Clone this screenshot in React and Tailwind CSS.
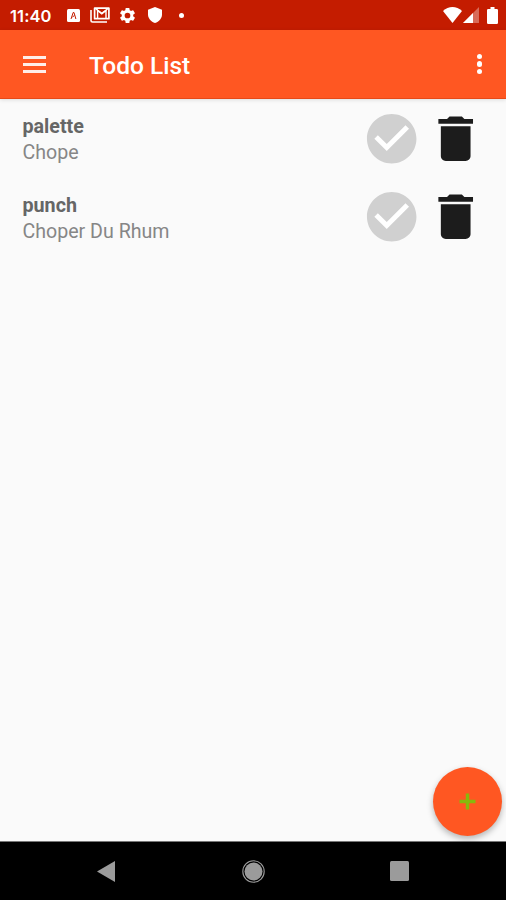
const TODOS = [
  { id: 1, title: 'palette', description: 'Chope' },
  { id: 2, title: 'punch', description: 'Choper Du Rhum' },
]

function StatusBar() {
  return (
    <div className="h-[30px] shrink-0 bg-[#c41c00] flex items-center text-white">
      <span className="ml-[10px] w-[57px] font-['Inter'] text-[16.5px] leading-[30px] font-semibold tracking-[0.1px] whitespace-nowrap mt-px">11:40</span>
      <svg className="w-[13px] h-[13px] mt-px" viewBox="0 0 13 13">
        <rect width="13" height="13" rx="1.5" fill="currentColor" />
        <path d="M4 10 L6.2 3.5 H7 L8.9 10 M5.4 8 L7.5 6.5" fill="none" stroke="#c41c00" strokeWidth="1" />
      </svg>
      <svg className="ml-[10px] w-[20px] h-[16px]" viewBox="0 0 20 16" fill="none" stroke="currentColor">
        <path d="M1 3V13.5Q1 15 2.5 15H17" strokeWidth="1.6" />
        <path d="M4.6 1.2V11.7H18.9V1.2Z" strokeWidth="1.7" strokeLinejoin="round" />
        <path d="M7.6 11V3.4L11.8 6.8L16 3.4V11" strokeWidth="1.4" />
        <path d="M5 1.2L11.8 6.4L18.5 1.2" strokeWidth="1.4" />
      </svg>
      <svg className="ml-[8px] w-[19px] h-[19px]" viewBox="0 0 24 24" fill="currentColor">
        <path d="M19.14 12.94c.04-.3.06-.61.06-.94 0-.32-.02-.64-.07-.94l2.03-1.58a.49.49 0 0 0 .12-.61l-1.92-3.32a.49.49 0 0 0-.59-.22l-2.39.96a7.03 7.03 0 0 0-1.62-.94l-.36-2.54a.48.48 0 0 0-.48-.41h-3.84a.48.48 0 0 0-.47.41l-.36 2.54c-.59.24-1.13.57-1.62.94l-2.39-.96a.48.48 0 0 0-.59.22L2.74 8.87a.48.48 0 0 0 .12.61l2.03 1.58c-.05.3-.09.63-.09.94s.02.64.07.94l-2.03 1.58a.49.49 0 0 0-.12.61l1.92 3.32c.12.22.37.29.59.22l2.39-.96c.5.38 1.03.7 1.62.94l.36 2.54c.05.24.24.41.48.41h3.84c.24 0 .44-.17.47-.41l.36-2.54c.59-.24 1.13-.56 1.62-.94l2.39.96c.22.08.47 0 .59-.22l1.92-3.32a.48.48 0 0 0-.12-.61l-2.01-1.58zM12 15.6A3.6 3.6 0 1 1 12 8.4a3.6 3.6 0 0 1 0 7.2z" />
      </svg>
      <svg className="ml-[11px] w-[14px] h-[16px]" viewBox="0 0 14 16" fill="currentColor">
        <path d="M7 0L14 2.8V7.5C14 11.4 11 14.9 7 16C3 14.9 0 11.4 0 7.5V2.8Z" />
      </svg>
      <span className="ml-[17px] w-[5px] h-[5px] rounded-full bg-white" />
      <div className="ml-auto mr-[8px] flex items-center">
        <svg className="w-[19px] h-[16px]" viewBox="0 0 19 16" fill="currentColor">
          <path d="M0 4C5.5-1.2 13.5-1.2 19 4L9.5 16Z" />
        </svg>
        <svg className="ml-px w-[16px] h-[16px]" viewBox="0 0 16 16" fill="currentColor">
          <path d="M0 16L16 0V16Z" fillOpacity="0.35" />
          <path d="M0 16L10 6V16Z" />
        </svg>
        <svg className="ml-[8px] w-[11px] h-[17px]" viewBox="0 0 11 17" fill="currentColor">
          <path d="M3.5 0H7.5V2H9.8Q11 2 11 3.2V15.8Q11 17 9.8 17H1.2Q0 17 0 15.8V3.2Q0 2 1.2 2H3.5Z" />
        </svg>
      </div>
    </div>
  )
}

function Toolbar() {
  return (
    <header className="h-[69px] shrink-0 bg-[#ff5722] border-b border-[#e64a19] flex items-center text-white shadow-[0_1px_4px_rgba(0,0,0,0.12)]">
      <button className="ml-[23px] w-[23px] h-[17px] flex flex-col justify-between opacity-90">
        <span className="w-full h-[3px] bg-white" />
        <span className="w-full h-[3px] bg-white" />
        <span className="w-full h-[3px] bg-white" />
      </button>
      <h1 className="ml-[43px] text-[24.5px] leading-[28px] font-medium mt-[4px]">Todo List</h1>
      <button className="ml-auto mr-[24px] flex flex-col gap-[2px]">
        <span className="w-[5.5px] h-[5.5px] rounded-full bg-white" />
        <span className="w-[5.5px] h-[5.5px] rounded-full bg-white" />
        <span className="w-[5.5px] h-[5.5px] rounded-full bg-white" />
      </button>
    </header>
  )
}

function TodoItem({ title, description }) {
  return (
    <li className="h-[78.7px] pl-[22.5px] pr-[21px] flex items-center">
      <div className="flex-1 leading-[26.5px] text-[19.7px] pt-[4px]">
        <div className="font-bold text-[#666]">{title}</div>
        <div className="text-[#868686] text-[19.6px]">{description}</div>
      </div>
      <svg className="w-[59.4px] h-[59.4px]" viewBox="0 0 24 24">
        <circle cx="12" cy="12" r="9.5" fill="#fff" />
        <path d="M12 2C6.48 2 2 6.48 2 12s4.48 10 10 10 10-4.48 10-10S17.52 2 12 2zm-2 15l-5-5 1.41-1.41L10 14.17l7.59-7.59L19 8l-9 9z" fill="#d0d0d0" />
      </svg>
      <svg className="ml-[4px] w-[59.4px] h-[59.4px]" viewBox="0 0 24 24" fill="#1c1c1c">
        <path d="M6 19c0 1.1.9 2 2 2h8c1.1 0 2-.9 2-2V7H6v12zM19 4h-3.5l-1-1h-5l-1 1H5v2h14V4z" />
      </svg>
    </li>
  )
}

function NavigationBar() {
  return (
    <nav className="h-[59px] shrink-0 bg-black border-t border-[#777] flex items-center">
      <svg className="ml-[97px] w-[18px] h-[21px]" viewBox="0 0 18 21">
        <path d="M0 10.5L18 0V21Z" fill="#9b9b9b" />
      </svg>
      <svg className="ml-[127px] w-[23px] h-[23px]" viewBox="0 0 23 23">
        <circle cx="11.5" cy="11.5" r="9" fill="#9b9b9b" />
        <circle cx="11.5" cy="11.5" r="10.7" fill="none" stroke="#9b9b9b" strokeWidth="1.1" />
      </svg>
      <span className="ml-[124.5px] w-[19.5px] h-[19.5px] rounded-[1.5px] bg-[#9b9b9b]" />
    </nav>
  )
}

export default function App() {
  return (
    <div className="relative w-full h-screen flex flex-col overflow-hidden bg-[#fafafa] font-['Roboto',sans-serif]">
      <StatusBar />
      <Toolbar />
      <ul className="flex-1">
        {TODOS.map((todo) => (
          <TodoItem key={todo.id} title={todo.title} description={todo.description} />
        ))}
      </ul>
      <button className="absolute right-[4.5px] bottom-[64px] w-[69px] h-[69px] rounded-full bg-[#ff5722] flex items-center justify-center shadow-[0_3px_6px_rgba(0,0,0,0.28)]">
        <svg className="w-[17px] h-[17px]" viewBox="0 0 17 17">
          <path d="M8.5 0.5V16.5M0.5 8.5H16.5" stroke="#88b80c" strokeWidth="3.4" />
        </svg>
      </button>
      <NavigationBar />
    </div>
  )
}
